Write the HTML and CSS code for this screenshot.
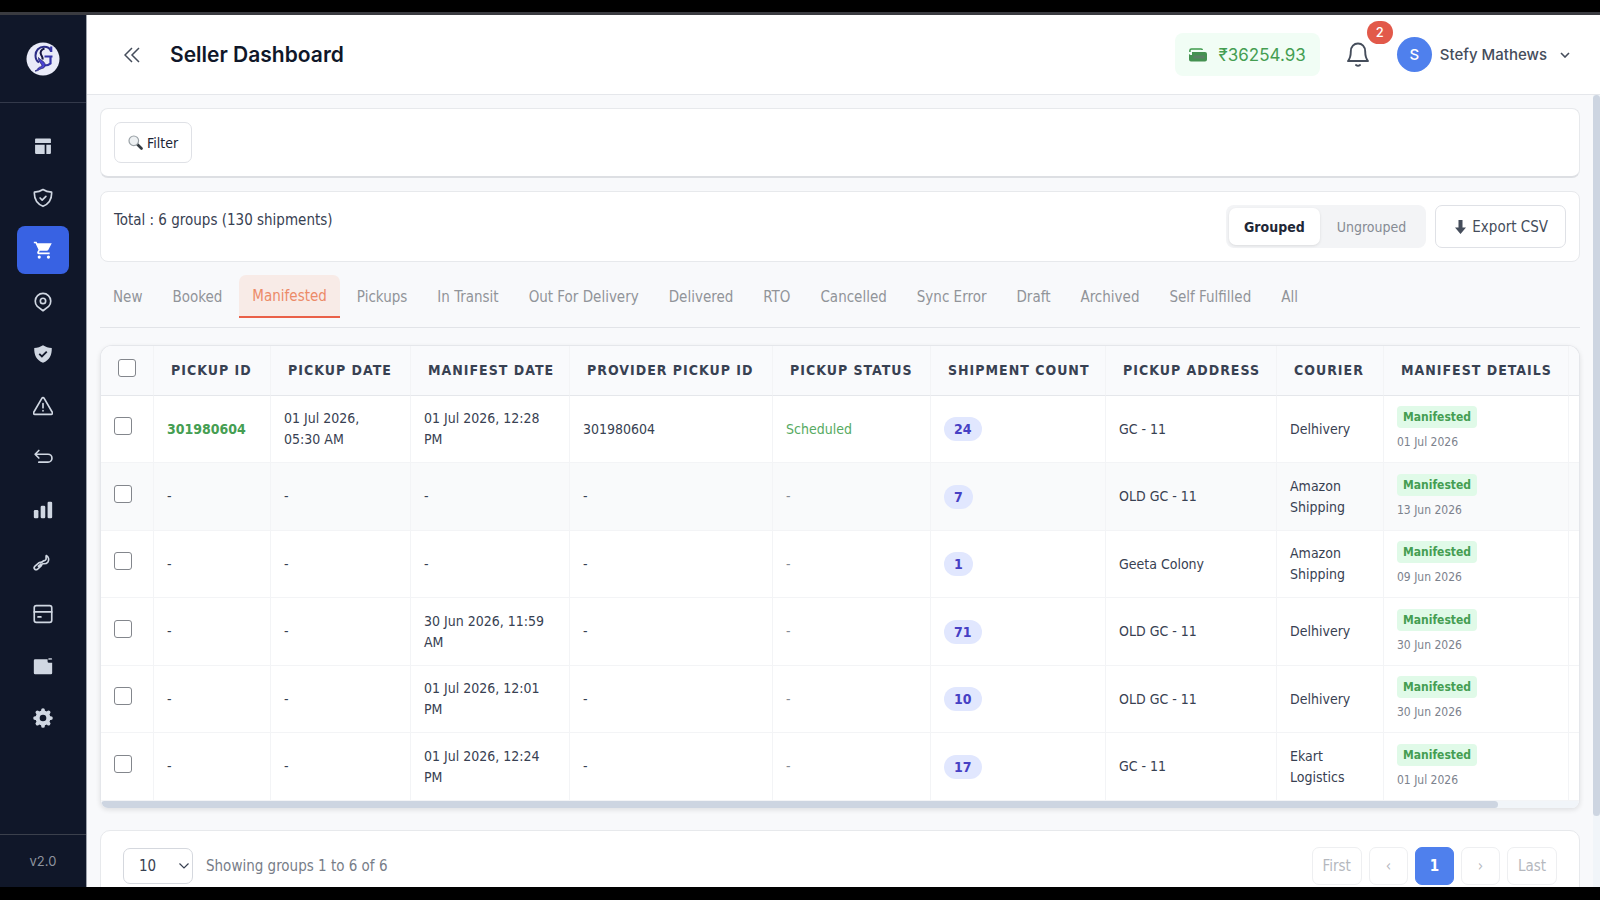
FILE: index.html
```html
<!DOCTYPE html>
<html lang="en">
<head>
    <meta charset="UTF-8">
    <meta name="viewport" content="width=device-width, initial-scale=1.0">
    <title>Seller Dashboard</title>
    <link rel="stylesheet" href="styles.css">
</head>
<body>

<div class="app">
    <aside class="sidebar">
        <div class="sidebar-logo">
            <svg width="34" height="34" viewBox="0 0 34 34" aria-label="Logo">
                <circle cx="17" cy="17" r="16.5" fill="#e9ebf8"/>
                <path d="M25 9.500C24 6 21 4.800 18 4.800c-5 0-8.500 3.700-8.500 8.700 0 3 1.200 5.500 3.500 7" fill="none" stroke="#2b2c86" stroke-width="2"/>
                <path d="M25.200 4.500v5.500M18.500 14.500h8M24.500 14.500v7c-1.500 1.500-3.500 2-6 2" fill="none" stroke="#3434a8" stroke-width="2.200"/>
                <path d="M18.500 6.500c-3.500 1-4.500 3.500-3.500 6 .5 1.500 2 2.500 1.500 5" fill="none" stroke="#15163f" stroke-width="2"/>
                <path d="M12.500 15.500c2.500 3.500 7.500 4 6.500 8.500-.8 3-3.500 2-5.500 3.500-1.200 1-3 1.700-4.500 1.500 2.500-.5 2.500-3 4.500-3.800 2-.7 3-.7 2-2.700-1-1.800-3-3-3-7z" fill="#4a43d6" stroke="#23246b" stroke-width=".8"/>
            </svg>
        </div>
        <nav class="sidebar-nav">
            <a href="#" aria-label="Dashboard"><svg viewBox="0 0 24 24" fill="currentColor"><path d="M2.500 4a1 1 0 0 1 1-1h17a1 1 0 0 1 1 1v4.500h-19zM2.500 10.500h11.500v11H3.500a1 1 0 0 1-1-1zM16 10.500h5.500v10a1 1 0 0 1-1 1H16z"/></svg></a>
            <a href="#" aria-label="Verification"><svg viewBox="0 0 24 24" class="line"><path d="M12 1.800c3 2 6.500 2.900 10.300 3.200.5 7.500-2 13.500-10.300 17C3.700 18.500 1.200 12.500 1.700 5c3.800-.3 7.300-1.200 10.300-3.200z"/><path d="M8.500 12l2.500 2.500 4.500-4.500"/></svg></a>
            <a href="#" class="active" aria-label="Orders"><svg viewBox="0 0 24 24" fill="currentColor"><path d="M1 2v2h2l3.600 7.600-1.350 2.450C4.520 15.370 5.480 17 7 17h13v-2H7.420a.25.25 0 0 1-.22-.37L8.100 13h8.450c.75 0 1.410-.41 1.750-1.030L22.500 4H5.210l-.94-2z"/><circle cx="7.500" cy="20.500" r="1.900"/><circle cx="18.500" cy="20.500" r="1.900"/></svg></a>
            <a href="#" aria-label="Tracking"><svg viewBox="0 0 24 24" class="line"><path d="M12 22.500l-6.800-5.200a9.300 9.300 0 1 1 13.600 0z"/><circle cx="12" cy="10.700" r="3.200"/></svg></a>
            <a href="#" aria-label="Protection"><svg viewBox="0 0 24 24"><path d="M12 1.500c3 2 6.500 3 10.500 3.200.3 8-2.500 14.500-10.500 17.800C4 19.200 1.200 12.700 1.500 4.700 5.500 4.500 9 3.500 12 1.500z" fill="currentColor"/><path d="M7.500 11.800l3.200 3.200 5.800-5.800" fill="none" stroke="#101729" stroke-width="2.200"/></svg></a>
            <a href="#" aria-label="Exceptions"><svg viewBox="0 0 24 24" class="line"><path d="M10.600 2.800L.9 19.500A1.600 1.600 0 0 0 2.300 22h19.400a1.600 1.600 0 0 0 1.400-2.500L13.400 2.800a1.600 1.600 0 0 0-2.800 0zM12 9v5M12 17.500v.5"/></svg></a>
            <a href="#" aria-label="Returns"><svg viewBox="0 0 24 24" class="line"><path d="M7 3L2.500 7.500 7 12M2.500 7.500H18a4.500 4.500 0 0 1 0 9.500H7"/></svg></a>
            <a href="#" aria-label="Reports"><svg viewBox="0 0 24 24" fill="currentColor"><rect x="1" y="12" width="5.500" height="10" rx="1.500"/><rect x="9.200" y="7" width="5.500" height="15" rx="1.500"/><rect x="17.500" y="2" width="5.500" height="20" rx="1.500"/></svg></a>
            <a href="#" aria-label="Tools"><svg viewBox="0 0 24 24" class="line"><path d="M2 20.500c-1-1-.6-2.500.4-3.500l4.600-4c1.400-1.200 3 .2 4.500-1.500 1.300-1.500 3.200-.8 4-2.500.7-1.500-.3-3.500.5-4.800 2.700 1.500 3.700 5 1.700 8-1.700 2.400-4.200 1.800-5.900 1.900-1.500.1-1 1.800-2.300 2.900l-4 3.500c-1 .8-2.600.9-3.500 0zM6.500 17l3-2.500"/></svg></a>
            <a href="#" aria-label="Billing"><svg viewBox="0 0 24 24" class="line"><rect x="1.500" y="2" width="21" height="20" rx="2.500"/><path d="M1.500 9.500h21M6 15.500h3.500"/></svg></a>
            <a href="#" aria-label="Wallet"><svg viewBox="0 0 24 24" fill="currentColor"><path d="M2.500 4h15v2.500A1.500 1.500 0 0 0 19 8h4v12.500a1.500 1.500 0 0 1-1.500 1.500h-19A1.500 1.500 0 0 1 1 20.500v-15A1.500 1.500 0 0 1 2.500 4zM18.500 2.800H22q1 0 1 1.500l-4.500.2z"/></svg></a>
            <a href="#" aria-label="Settings"><svg viewBox="0 0 24 24"><path d="M12 2.500v19M2.500 12h19M5.300 5.300l13.400 13.400M18.700 5.300L5.300 18.700" stroke="currentColor" stroke-width="4.500" stroke-linecap="round"/><circle cx="12" cy="12" r="6.500" fill="#101729" stroke="currentColor" stroke-width="5"/></svg></a>
        </nav>
        <div class="sidebar-version">v2.0</div>
    </aside>

    <div class="main">
        <header class="header">
            <button type="button" class="collapse-btn" aria-label="Collapse menu">
                <svg width="16" height="16" viewBox="0 0 16 16" fill="none" stroke="currentColor" stroke-width="1.500"><path d="M8 1L1 8l7 7M15 1L8 8l7 7"/></svg>
            </button>
            <h1>Seller Dashboard</h1>
            <a href="#" class="wallet">
                <svg width="18" height="14" viewBox="0 0 18 14"><path d="M.9 4V2.500Q.9.900 2.500.9H12q1.300 0 1.300 1" fill="none" stroke="#3f9a4c" stroke-width="1.500"/><path d="M3 4h13q2 0 2 2v5.500q0 2-2 2H2q-2 0-2-2V6l1.500 1H3z" fill="#449150"/><path d="M4.500 7.500h11v3h-11z" fill="#5b8065"/></svg>
                <span>₹36254.93</span>
            </a>
            <button type="button" class="bell" aria-label="Notifications">
                <svg width="24" height="26" viewBox="0 0 24 26" fill="none" stroke="currentColor" stroke-width="1.900" stroke-linecap="round" stroke-linejoin="round"><path d="M2 19h20c-2-2.500-2.800-5-2.800-9.500C19.200 4.500 16 1.500 12 1.500s-7.200 3-7.200 8c0 4.500-.8 7-2.800 9.500zM10 23q2 1.600 4 0"/></svg>
                <span class="bell-badge">2</span>
            </button>
            <button type="button" class="user">
                <span class="avatar">S</span>
                <span>Stefy Mathews</span>
                <svg width="10" height="6" viewBox="0 0 10 6" fill="none" stroke="currentColor" stroke-width="1.600"><path d="M1 1l4 4 4-4"/></svg>
            </button>
        </header>

        <div class="body">
            <main class="content">
                <section class="card filter-card">
                    <button type="button" class="btn">
                        <svg width="15" height="15" viewBox="0 0 15 15"><path d="M9.500 9.500l4 4" stroke="#333a40" stroke-width="2.600" stroke-linecap="round"/><circle cx="5.800" cy="5.800" r="4.800" fill="#eef1f3" stroke="#9aa1a6" stroke-width="1.200"/></svg>
                        Filter
                    </button>
                </section>

                <section class="card total-card">
                    <span class="total">Total : 6 groups (130 shipments)</span>
                    <div class="actions">
                        <div class="segment">
                            <button type="button" class="on">Grouped</button>
                            <button type="button">Ungrouped</button>
                        </div>
                        <button type="button" class="btn export">
                            <svg width="11" height="14" viewBox="0 0 11 14" fill="currentColor"><path d="M3.500 0h4v7.500H11L5.500 14 0 7.500h3.500z"/></svg>
                            Export CSV
                        </button>
                    </div>
                </section>

                <nav class="tabs">
                    <a href="#">New</a>
                    <a href="#">Booked</a>
                    <a href="#" class="active">Manifested</a>
                    <a href="#">Pickups</a>
                    <a href="#">In Transit</a>
                    <a href="#">Out For Delivery</a>
                    <a href="#">Delivered</a>
                    <a href="#">RTO</a>
                    <a href="#">Cancelled</a>
                    <a href="#">Sync Error</a>
                    <a href="#">Draft</a>
                    <a href="#">Archived</a>
                    <a href="#">Self Fulfilled</a>
                    <a href="#">All</a>
                </nav>

                <section class="table-card">
                    <div class="table-wrap">
                        <table>
                            <colgroup>
                                <col class="c-check"><col class="c-id"><col class="c-date"><col class="c-manifest"><col class="c-provider"><col class="c-status"><col class="c-count"><col class="c-address"><col class="c-courier"><col class="c-details"><col class="c-more">
                            </colgroup>
                            <thead>
                                <tr>
                                    <th><input type="checkbox" aria-label="Select all"></th>
                                    <th>PICKUP ID</th>
                                    <th>PICKUP DATE</th>
                                    <th>MANIFEST DATE</th>
                                    <th>PROVIDER PICKUP ID</th>
                                    <th>PICKUP STATUS</th>
                                    <th>SHIPMENT COUNT</th>
                                    <th>PICKUP ADDRESS</th>
                                    <th>COURIER</th>
                                    <th>MANIFEST DETAILS</th>
                                    <th></th>
                                </tr>
                            </thead>
                            <tbody>
                                <tr>
                                    <td><input type="checkbox" aria-label="Select group 1"></td>
                                    <td><a href="#" class="pickup-link">301980604</a></td>
                                    <td>01 Jul 2026, 05:30 AM</td>
                                    <td>01 Jul 2026, 12:28 PM</td>
                                    <td>301980604</td>
                                    <td class="scheduled">Scheduled</td>
                                    <td><span class="count">24</span></td>
                                    <td>GC - 11</td>
                                    <td>Delhivery</td>
                                    <td><span class="tag">Manifested</span><span class="tag-date">01 Jul 2026</span></td>
                                    <td></td>
                                </tr>
                                <tr class="hovered">
                                    <td><input type="checkbox" aria-label="Select group 2"></td>
                                    <td>-</td>
                                    <td>-</td>
                                    <td>-</td>
                                    <td>-</td>
                                    <td class="muted">-</td>
                                    <td><span class="count">7</span></td>
                                    <td>OLD GC - 11</td>
                                    <td>Amazon Shipping</td>
                                    <td><span class="tag">Manifested</span><span class="tag-date">13 Jun 2026</span></td>
                                    <td></td>
                                </tr>
                                <tr>
                                    <td><input type="checkbox" aria-label="Select group 3"></td>
                                    <td>-</td>
                                    <td>-</td>
                                    <td>-</td>
                                    <td>-</td>
                                    <td class="muted">-</td>
                                    <td><span class="count">1</span></td>
                                    <td>Geeta Colony</td>
                                    <td>Amazon Shipping</td>
                                    <td><span class="tag">Manifested</span><span class="tag-date">09 Jun 2026</span></td>
                                    <td></td>
                                </tr>
                                <tr>
                                    <td><input type="checkbox" aria-label="Select group 4"></td>
                                    <td>-</td>
                                    <td>-</td>
                                    <td>30 Jun 2026, 11:59 AM</td>
                                    <td>-</td>
                                    <td class="muted">-</td>
                                    <td><span class="count">71</span></td>
                                    <td>OLD GC - 11</td>
                                    <td>Delhivery</td>
                                    <td><span class="tag">Manifested</span><span class="tag-date">30 Jun 2026</span></td>
                                    <td></td>
                                </tr>
                                <tr>
                                    <td><input type="checkbox" aria-label="Select group 5"></td>
                                    <td>-</td>
                                    <td>-</td>
                                    <td>01 Jul 2026, 12:01 PM</td>
                                    <td>-</td>
                                    <td class="muted">-</td>
                                    <td><span class="count">10</span></td>
                                    <td>OLD GC - 11</td>
                                    <td>Delhivery</td>
                                    <td><span class="tag">Manifested</span><span class="tag-date">30 Jun 2026</span></td>
                                    <td></td>
                                </tr>
                                <tr>
                                    <td><input type="checkbox" aria-label="Select group 6"></td>
                                    <td>-</td>
                                    <td>-</td>
                                    <td>01 Jul 2026, 12:24 PM</td>
                                    <td>-</td>
                                    <td class="muted">-</td>
                                    <td><span class="count">17</span></td>
                                    <td>GC - 11</td>
                                    <td>Ekart Logistics</td>
                                    <td><span class="tag">Manifested</span><span class="tag-date">01 Jul 2026</span></td>
                                    <td></td>
                                </tr>
                            </tbody>
                        </table>
                    </div>
                    <div class="scroll-x"><div class="thumb"></div></div>
                </section>

                <section class="card pagination">
                    <div class="page-size">
                        <select aria-label="Groups per page">
                            <option>10</option>
                            <option>25</option>
                            <option>50</option>
                        </select>
                        <svg width="10" height="6" viewBox="0 0 10 6" fill="none" stroke="currentColor" stroke-width="1.200"><path d="M.5.5L5 5 9.500.5"/></svg>
                    </div>
                    <span class="showing">Showing groups 1 to 6 of 6</span>
                    <div class="pages">
                        <button type="button" disabled>First</button>
                        <button type="button" disabled>‹</button>
                        <button type="button" class="current">1</button>
                        <button type="button" disabled>›</button>
                        <button type="button" disabled>Last</button>
                    </div>
                </section>
            </main>
            <div class="scroll-y"><div class="thumb"></div></div>
        </div>
    </div>
</div>

</body>
</html>
```
FILE: styles.css
```css
* {
    box-sizing: border-box;
}
body {
    margin: 0;
    padding: 12px 0 13px;
    height: 100vh;
    background: #000;
    color: #384152;
    font-family: "DejaVu Sans Condensed", "Noto Sans", sans-serif;
    font-size: 15px;
}
button, select {
    font: inherit;
    color: inherit;
    cursor: pointer;
}
a {
    color: inherit;
    text-decoration: none;
}
svg {
    display: block;
    flex-shrink: 0;
}
.app {
    display: flex;
    height: 100%;
    overflow: hidden;
    border-top: 3px solid #3a3b40;
    background: #f8f9fb;
}

/* Sidebar */
.sidebar {
    display: flex;
    flex-direction: column;
    flex: 0 0 87px;
    background: #101729;
    border-right: 1px solid #9ea3ac;
    color: #d0d7e2;
}
.sidebar-logo {
    display: flex;
    justify-content: center;
    align-items: center;
    height: 88px;
    border-bottom: 1px solid #33394a;
}
.sidebar-nav {
    display: flex;
    flex-direction: column;
    align-items: center;
    gap: 4px;
    padding-top: 19px;
}
.sidebar-nav a {
    display: flex;
    justify-content: center;
    align-items: center;
    width: 52px;
    height: 48px;
    border-radius: 8px;
}
.sidebar-nav svg {
    width: 20px;
    height: 20px;
}
.sidebar-nav .active {
    background: #3862e3;
    color: #fff;
}
.line {
    fill: none;
    stroke: currentColor;
    stroke-width: 2;
    stroke-linecap: round;
    stroke-linejoin: round;
}
.sidebar-version {
    display: flex;
    justify-content: center;
    align-items: center;
    height: 53px;
    margin-top: auto;
    border-top: 1px solid #3b404c;
    color: #8d939e;
    font-family: Inter, sans-serif;
    font-size: 13px;
}

/* Header */
.main {
    display: flex;
    flex-direction: column;
    flex: 1;
    min-width: 0;
}
.header {
    display: flex;
    align-items: center;
    flex: 0 0 80px;
    padding: 0 30px 0 37px;
    background: #fff;
    border-bottom: 1px solid #e5e7eb;
    color: #454d5b;
    font-family: Inter, sans-serif;
}
.header button {
    padding: 0;
    border: none;
    background: none;
}
.header h1 {
    margin: 0 auto 0 30px;
    color: #101729;
    font-size: 21px;
    font-weight: 600;
}
.wallet {
    display: flex;
    align-items: center;
    gap: 12px;
    height: 43px;
    padding: 0 14px;
    border-radius: 8px;
    background: #f1fdf5;
    color: #459e52;
    font-size: 17px;
}
.bell {
    position: relative;
    margin: 0 27px 0 26px;
}
.bell-badge {
    position: absolute;
    top: -21px;
    right: -23px;
    width: 26px;
    height: 23px;
    border-radius: 12px;
    background: #e2594a;
    color: #fff;
    font-size: 13px;
    font-weight: 500;
    line-height: 23px;
    text-align: center;
}
.user {
    display: flex;
    align-items: center;
    gap: 8px;
    font-size: 15px;
    font-weight: 500;
}
.user svg {
    margin-left: 5px;
}
.avatar {
    width: 35px;
    height: 35px;
    border-radius: 50%;
    background: #4f80ed;
    color: #fff;
    line-height: 35px;
    text-align: center;
}

/* Content */
.body {
    display: flex;
    flex: 1;
    min-height: 0;
}
.content {
    flex: 1;
    min-width: 0;
    overflow: hidden;
    padding: 13px 13px 0;
}
.scroll-y {
    flex: 0 0 7px;
    background: #f1f5f9;
}
.scroll-y .thumb {
    height: 91%;
    border-radius: 4px;
    background: #cdd5e1;
}
.card {
    display: flex;
    padding: 13px;
    background: #fff;
    border: 1px solid #e7e9ec;
    border-radius: 8px;
}
.btn {
    display: flex;
    align-items: center;
    gap: 4px;
    height: 41px;
    padding: 0 13px;
    background: #fff;
    border: 1px solid #dfe1e6;
    border-radius: 7px;
    color: #1b2436;
    font-size: 14px;
}
.filter-card {
    margin-bottom: 13px;
    border-bottom: 2px solid #dddfe3;
}
.total-card {
    justify-content: space-between;
    height: 71px;
}
.total {
    line-height: 30px;
}
.actions {
    display: flex;
    gap: 9px;
}
.segment {
    display: flex;
    height: 43px;
    padding: 3px;
    border-radius: 8px;
    background: #f3f4f6;
}
.segment button {
    padding: 0 17px;
    border: none;
    border-radius: 7px;
    background: none;
    color: #868b94;
    font-size: 14px;
}
.segment .on {
    padding: 0 15px;
    background: #fff;
    box-shadow: 0 1px 3px rgba(0, 0, 0, 0.1);
    color: #1f2837;
    font-weight: bold;
}
.export {
    gap: 6px;
    height: 43px;
    padding: 0 17px 0 19px;
    color: #454d5b;
    font-size: 15px;
}

/* Tabs */
.tabs {
    display: flex;
    gap: 4px;
    padding: 13px 0 9px;
    margin-bottom: 17px;
    border-bottom: 1px solid #e2e4e8;
    color: #919499;
}
.tabs a {
    height: 43px;
    padding: 0 13px;
    line-height: 45px;
    white-space: nowrap;
}
.tabs .active {
    border-bottom: 2px solid #ea6048;
    border-radius: 7px 7px 0 0;
    background: #f8ebe7;
    color: #ec8a68;
    line-height: 43px;
}

/* Table */
.table-card {
    overflow: hidden;
    margin-bottom: 22px;
    border: 1px solid #e5e7eb;
    border-bottom: none;
    border-radius: 12px 12px 8px 8px;
    background: #fff;
    box-shadow: 0 2px 5px rgba(0, 0, 0, 0.1);
}
.table-wrap {
    overflow: hidden;
}
table {
    width: 1568px;
    border-collapse: separate;
    border-spacing: 0;
    table-layout: fixed;
    font-size: 14px;
    line-height: 21px;
}
.c-check { width: 53px; }
.c-id { width: 117px; }
.c-date { width: 140px; }
.c-manifest { width: 159px; }
.c-provider { width: 203px; }
.c-status { width: 158px; }
.c-count { width: 175px; }
.c-address { width: 171px; }
.c-courier { width: 107px; }
.c-details { width: 185px; }
th, td {
    padding: 0 13px;
    border-right: 1px solid #f3f4f6;
    border-bottom: 1px solid #f3f4f6;
    text-align: left;
}
th {
    height: 50px;
    padding: 0 17px;
    border-bottom-color: #e5e7eb;
    background: #f9fafc;
    color: #384152;
    font-weight: bold;
    letter-spacing: 1px;
    white-space: nowrap;
}
td {
    height: 67px;
}
tr:nth-child(even) td {
    height: 68px;
}
.hovered td {
    background: #f9fafb;
}
input[type="checkbox"] {
    display: block;
    appearance: none;
    width: 18px;
    height: 18px;
    margin: 0 0 6px;
    border: 1px solid #83868c;
    border-radius: 3px;
    background: #fff;
}
.pickup-link {
    color: #459e52;
    font-weight: bold;
}
td.scheduled {
    color: #56aa62;
}
td.muted {
    color: #868b94;
}
.count {
    display: inline-block;
    padding: 0 10px;
    border-radius: 12px;
    background: #e1e7fe;
    color: #4640c4;
    font-weight: bold;
    line-height: 24px;
}
.tag {
    display: table;
    padding: 0 6px;
    border-radius: 4px;
    background: #e0fae8;
    color: #459e52;
    font-size: 12px;
    font-weight: bold;
    line-height: 22px;
}
.tag-date {
    display: block;
    margin-top: 4px;
    color: #7c828d;
    font-size: 12px;
    line-height: 20px;
}
.scroll-x {
    height: 7px;
    background: #f1f5f9;
}
.scroll-x .thumb {
    width: 94.5%;
    height: 7px;
    border-radius: 4px;
    background: #cdd5e1;
}

/* Pagination */
.pagination {
    align-items: center;
    gap: 13px;
    padding: 16px 22px;
    border-radius: 10px;
    color: #777d88;
}
.page-size {
    position: relative;
    color: #384152;
}
.page-size select {
    width: 70px;
    height: 36px;
    padding: 0 15px;
    appearance: none;
    border: 1px solid #d5d8de;
    border-radius: 7px;
    background: #fff;
}
.page-size svg {
    position: absolute;
    top: 15px;
    right: 4px;
    pointer-events: none;
}
.pages {
    display: flex;
    gap: 7px;
    margin-left: auto;
}
.pages button {
    min-width: 39px;
    height: 38px;
    padding: 0 10px;
    border: 1px solid #eeeff1;
    border-radius: 7px;
    background: #fff;
    color: #b5b8be;
}
.pages .current {
    border-color: #4f80ed;
    background: #4f80ed;
    color: #fff;
    font-weight: bold;
}
```
